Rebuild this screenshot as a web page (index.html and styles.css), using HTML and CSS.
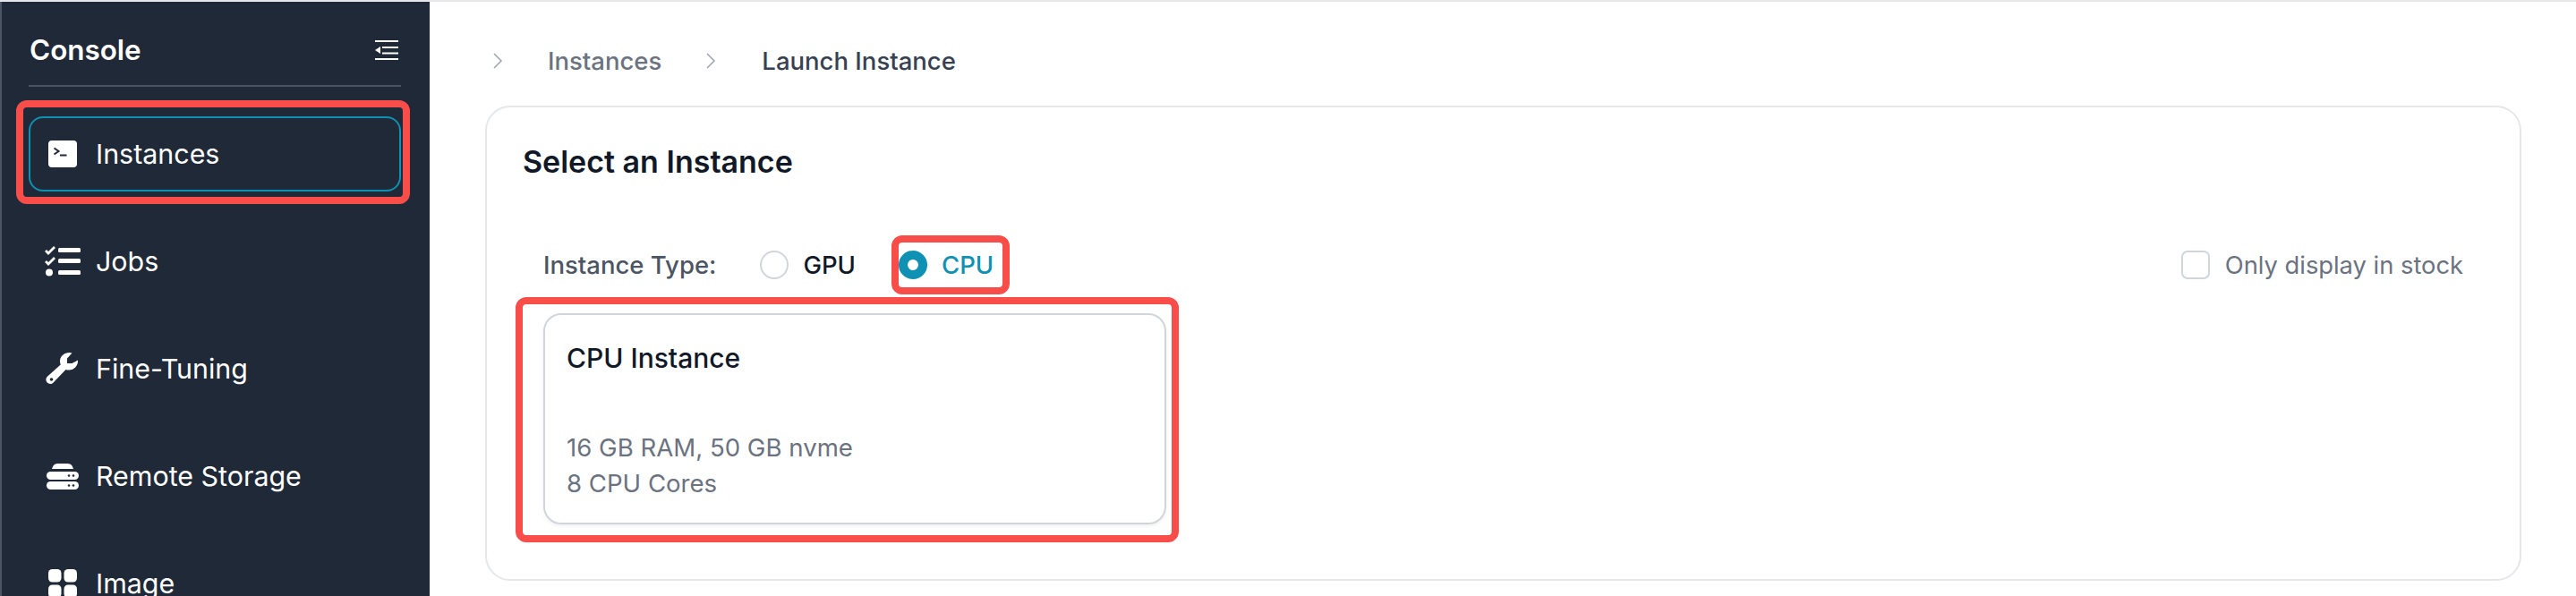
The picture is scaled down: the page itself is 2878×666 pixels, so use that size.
FILE: index.html
```html
<!DOCTYPE html>
<html lang="en">
<head>
<meta charset="utf-8">
<title>Launch Instance</title>
<link rel="stylesheet" href="styles.css">
</head>
<body>
<div class="app">
  <aside class="sidebar">
    <div class="side-head">
      <span class="brand">Console</span>
      <svg class="collapse" viewBox="0 0 26 22"><path d="M0 1h26M8 8h18M8 14.500h18M0 21h26" stroke="#fff" stroke-width="2" fill="none"/><path d="M6 7v8L0 11z" fill="#fff"/></svg>
    </div>
    <nav class="nav">
      <div class="nav-active-wrap">
        <a class="nav-item active">
          <svg class="nav-icon" viewBox="0 0 40 40"><g transform="translate(4 5)"><rect width="32" height="30" rx="4" fill="#fff"/><path d="M6.500 8.500l5 3.500-5 3.500" fill="none" stroke="#1f2937" stroke-width="2"/><path d="M13 16.500h7.500" stroke="#1f2937" stroke-width="2"/></g></svg>
          <span>Instances</span>
        </a>
        <span class="mark mark-nav"></span>
      </div>
      <a class="nav-item">
        <svg class="nav-icon" viewBox="0 0 40 40"><g transform="translate(0 3)"><path d="M1 5l3 3 7-7M1 17l3 3 7-7" fill="none" stroke="#fff" stroke-width="2.800"/><circle cx="5" cy="29.500" r="4" fill="#fff"/><rect x="15" y="2" width="25" height="5" rx="1.500" fill="#fff"/><rect x="15" y="14" width="25" height="5" rx="1.500" fill="#fff"/><rect x="15" y="27" width="25" height="5" rx="1.500" fill="#fff"/></g></svg>
        <span>Jobs</span>
      </a>
      <a class="nav-item">
        <svg class="nav-icon" viewBox="0 0 40 40"><g transform="translate(2 2)"><path d="M35 8.500c.5 6-4 11-10 11-1.300 0-2.400-.2-3.500-.6L7.600 33.500c-2 2-5 2-6.800.1-2-2-1.800-5 .1-6.800L15.700 13.400c-.5-1.200-.7-2.500-.7-3.900C15 4 20 0 25.500 0c1 0 2.200.2 3 .5L23 6.500v5.500h5.500z" fill="#fff"/><circle cx="5.500" cy="30" r="1.800" fill="#1f2937"/></g></svg>
        <span>Fine-Tuning</span>
      </a>
      <a class="nav-item">
        <svg class="nav-icon" viewBox="0 0 40 40"><g transform="translate(2 5)"><path d="M6 7c1-4 3-6 6-6h12c3 0 5 2 6 6z" fill="#fff"/><rect y="10" width="36" height="9" rx="4.500" fill="#fff"/><rect y="21" width="36" height="9" rx="4.500" fill="#fff"/><circle cx="25" cy="14.500" r="1.300" fill="#1f2937"/><circle cx="30" cy="14.500" r="1.300" fill="#1f2937"/><circle cx="25" cy="25.500" r="1.300" fill="#1f2937"/><circle cx="30" cy="25.500" r="1.300" fill="#1f2937"/></g></svg>
        <span>Remote Storage</span>
      </a>
      <a class="nav-item">
        <svg class="nav-icon" viewBox="0 0 40 40"><g transform="translate(4 4)"><rect width="14.500" height="14.500" rx="4.500" fill="#fff"/><rect x="17.500" width="14.500" height="14.500" rx="4.500" fill="#fff"/><rect y="17.500" width="14.500" height="14.500" rx="4.500" fill="#fff"/><rect x="17.500" y="17.500" width="14.500" height="14.500" rx="4.500" fill="#fff"/></g></svg>
        <span>Image</span>
      </a>
    </nav>
  </aside>
  <main class="main">
    <div class="crumbs">
      <svg class="chev" viewBox="0 0 12 20"><path d="M2 2l8 8-8 8" fill="none" stroke="#9ca3af" stroke-width="1.500"/></svg>
      <span class="crumb">Instances</span>
      <svg class="chev" viewBox="0 0 12 20"><path d="M2 2l8 8-8 8" fill="none" stroke="#9ca3af" stroke-width="1.500"/></svg>
      <span class="crumb current">Launch Instance</span>
    </div>
    <section class="panel">
      <h2 class="panel-title">Select an Instance</h2>
      <div class="type-row">
        <span class="type-label">Instance Type:</span>
        <label class="radio"><span class="dot"></span><span>GPU</span></label>
        <label class="radio selected"><span class="dot"></span><span>CPU</span><span class="mark mark-cpu"></span></label>
        <label class="stock"><span class="box"></span><span>Only display in stock</span></label>
      </div>
      <div class="card-wrap">
        <div class="card">
          <div class="card-title">CPU Instance</div>
          <div class="card-spec">16 GB RAM, 50 GB nvme</div>
          <div class="card-spec">8 CPU Cores</div>
        </div>
        <span class="mark mark-card"></span>
      </div>
    </section>
  </main>
</div>
</body>
</html>
```
FILE: styles.css
```css
* { box-sizing: border-box; }
html, body { margin: 0; height: 100%; overflow: hidden; background: #fff; }
body { font-family: Inter, "Liberation Sans", sans-serif; }
.app { display: flex; height: 666px; border-top: 2px solid #e5e7eb; overflow: hidden; }
.sidebar { width: 480px; flex: none; background: #1f2937; border-left: 2px solid #4b5563; padding: 0 32px 0 30px; color: #fff; }
.side-head { height: 95px; display: flex; align-items: center; justify-content: space-between; padding: 15px 3px 0 1px; border-bottom: 2px solid #4b5563; }
.brand { font-size: 31.400px; font-weight: 600; }
.collapse { width: 26px; height: 22px; }
.nav { display: flex; flex-direction: column; gap: 36px; padding-top: 33px; }
.nav-active-wrap { position: relative; }
.nav-item { height: 84px; flex: none; display: flex; align-items: center; gap: 17px; padding-left: 16px; font-size: 30.400px; font-weight: 400; border: 2px solid transparent; border-radius: 16px; }
.nav-item.active { border-color: #0e91b2; }
.nav-icon { width: 40px; height: 40px; flex: none; }
.main { flex: 1; padding: 0 61px 0 62px; }
.crumbs { height: 116px; display: flex; align-items: center; font-size: 27.500px; font-weight: 500; padding: 16px 0 0 8px; }
.chev { width: 12px; height: 20px; flex: none; }
.crumb { color: #6b7280; margin: 0 49px 0 50px; }
.crumb.current { color: #374151; margin: 0 0 0 51px; }
.panel { height: 531px; border: 2px solid #e5e7eb; border-radius: 28px; padding: 0 63px; }
.panel-title { margin: 0 0 0 -23px; padding-top: 41px; font-size: 34px; font-weight: 600; color: #111827; line-height: 40px; }
.type-row { display: flex; align-items: center; height: 32px; margin-top: 79px; font-size: 27.500px; font-weight: 500; }
.type-label { color: #4b5563; margin-right: 49px; }
.radio { position: relative; display: flex; align-items: center; gap: 16px; color: #111827; margin-right: 48px; }
.radio.selected { color: #0e91b2; }
.dot { width: 32px; height: 32px; border: 2px solid #d1d5db; border-radius: 50%; background: #fff; flex: none; }
.radio.selected .dot { border: 10px solid #0e91b2; }
.stock { margin-left: auto; display: flex; align-items: center; gap: 17px; color: #6b7280; font-weight: 400; font-size: 27.300px; }
.box { width: 32px; height: 32px; border: 2px solid #d1d5db; border-radius: 7px; flex: none; }
.card-wrap { position: relative; width: 696px; margin-top: 38px; }
.card { height: 236px; border: 2px solid #d1d5db; border-radius: 20px; padding: 28px 24px 0; box-shadow: 0 2px 4px rgba(0,0,0,.06); }
.card-title { font-size: 30px; font-weight: 500; color: #111827; line-height: 40px; margin-bottom: 60px; }
.card-spec { font-size: 27.600px; color: #6b7280; line-height: 40px; }
.mark { position: absolute; border: 8px solid #f84d49; border-radius: 12px; pointer-events: none; }
.mark-nav { left: -14px; right: -10px; top: -18px; bottom: -14px; }
.mark-cpu { left: -8px; right: -18px; top: -16px; bottom: -16px; }
.mark-card { left: -31px; right: -14px; top: -18px; bottom: -20px; }
```
